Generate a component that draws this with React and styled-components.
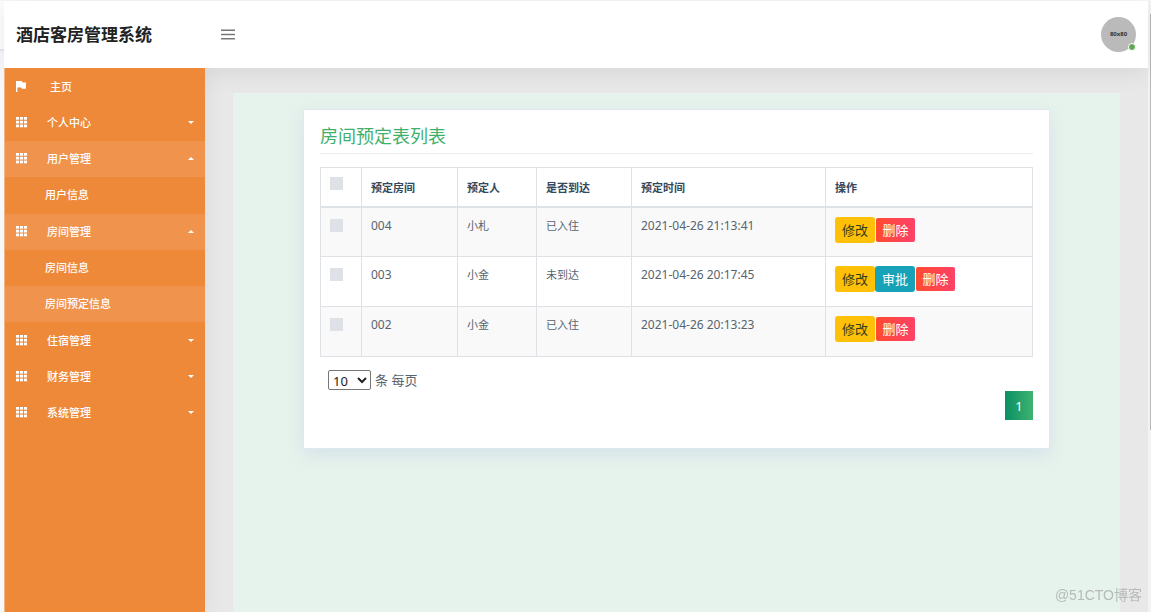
import React, { useState } from "react";
import styled, { createGlobalStyle, css } from "styled-components";

const Global = createGlobalStyle`
  *, *::before, *::after { box-sizing: border-box; }
  body {
    margin: 0;
    font-family: "Noto Sans", "Noto Sans CJK SC", sans-serif;
    font-size: 13px;
    color: #56646f;
    background: #f5f7fa;
  }
  button, select, input { font-family: inherit; margin: 0; }
  a { color: inherit; text-decoration: none; }
  ul { list-style: none; margin: 0; padding: 0; }
`;

const Page = styled.div`
  display: grid;
  grid-template-columns: 4px minmax(0, 1fr) 3px;
  min-height: 100vh;
  padding-top: 1px;
  overflow: hidden;
`;

const Rail = styled.div`
  background: #f7f8fb;
  &::before {
    content: "";
    display: block;
    height: 50px;
    background: #fdfdfd;
    border-bottom: 2px solid #e6e9ee;
  }
`;

const ScrollTrack = styled.div`
  display: flex;
  justify-content: flex-end;
  padding-top: 13px;
  background: #f3f3f3;
`;

const ScrollThumb = styled.div`
  width: 1px;
  height: 416px;
  background: #b8b8b8;
`;

const Shell = styled.div`
  display: flex;
  flex-direction: column;
  background: #e8e8e8;
`;

const Header = styled.header`
  position: relative;
  z-index: 2;
  display: flex;
  align-items: center;
  height: 67px;
  padding: 0 12px;
  background: #fff;
  box-shadow: 0 4px 24px rgba(0, 0, 0, 0.08);
`;

const Brand = styled.h1`
  flex: none;
  width: 204px;
  margin: 0;
  font-size: 17px;
  line-height: 24px;
  font-weight: 700;
  color: #222;
`;

const MenuToggle = styled.button`
  display: flex;
  padding: 0;
  border: 0;
  background: none;
  color: #777;
  cursor: pointer;
`;

const Avatar = styled.button`
  position: relative;
  width: 35px;
  height: 35px;
  margin-left: auto;
  padding: 0;
  border: 0;
  border-radius: 50%;
  background: #bababa;
  color: #333;
  font-size: 6px;
  font-weight: 700;
  line-height: 35px;
`;

const Status = styled.span`
  position: absolute;
  right: 0;
  bottom: 1px;
  width: 8px;
  height: 8px;
  border: 1px solid #fff;
  border-radius: 50%;
  background: #62a654;
`;

const Body = styled.div`
  display: flex;
  flex: 1;
`;

const Sidebar = styled.nav`
  position: relative;
  z-index: 3;
  flex: none;
  width: 201px;
  padding-top: 1px;
  background: #ed8939;
  border-left: 1px solid #f3b581;
  box-shadow: 2px 0 20px rgba(0, 0, 0, 0.06);
  clip-path: inset(0 -30px 0 0);
`;

const itemStyle = css`
  display: flex;
  align-items: center;
  width: 100%;
  height: 36px;
  border: 0;
  color: #fff;
  font-size: 11px;
  line-height: 16px;
  font-weight: 500;
  text-align: left;
  cursor: pointer;
  background: ${(p) => (p.$active ? "#f0934d" : "transparent")};
`;

const MenuButton = styled.button`
  ${itemStyle}
  gap: 20px;
  padding: 0 11px;
`;

const HomeLink = styled.a`
  ${itemStyle}
  gap: 23px;
  padding: 0 11px;
`;

const SubLink = styled.a`
  ${itemStyle}
  padding: 0 40px;
`;

const SubMenu = styled.ul`
  margin-bottom: 1px;
`;

const MenuIcon = styled.svg`
  flex: none;
  fill: currentColor;
`;

const Caret = styled.svg`
  margin-left: auto;
  fill: currentColor;
`;

const Main = styled.main`
  display: flex;
  flex: 1;
  min-width: 0;
  padding: 25px 28px 0;
`;

const Canvas = styled.div`
  flex: 1;
  min-width: 0;
  padding: 16px 70px;
  background: #e6f3ec;
`;

const Card = styled.section`
  padding: 14px 16px 28px;
  border: 1px solid #e0e8ef;
  border-radius: 2px;
  background: #fff;
  box-shadow: 0 6px 18px rgba(190, 203, 230, 0.4);
`;

const CardTitle = styled.h2`
  margin: 0 0 13px;
  padding-bottom: 5px;
  border-bottom: 1px solid #ececee;
  font-size: 18px;
  line-height: 24px;
  font-weight: 400;
  color: #3fb06c;
`;

const Table = styled.table`
  width: 100%;
  table-layout: fixed;
  border-collapse: collapse;
  font-size: 11px;
  line-height: 18px;
`;

const Col = styled.col`
  width: ${(p) => p.$w || "auto"};
`;

const Th = styled.th`
  height: 39px;
  padding: 3px 9px 0;
  border: 1px solid #dee2e6;
  border-bottom-width: 2px;
  text-align: left;
  vertical-align: middle;
  font-weight: 700;
  color: #34495e;
`;

const Tr = styled.tr`
  height: 50px;
  &:nth-child(odd) { background: #f9f9f9; }
`;

const Td = styled.td`
  padding: 9px 9px 0;
  border: 1px solid #dee2e6;
  vertical-align: top;
  font-size: ${(p) => (p.$numeric ? "12px" : "11px")};
`;

const Check = styled.input`
  appearance: none;
  display: block;
  width: 13px;
  height: 13px;
  margin: ${(p) => (p.$head ? "-9px 0 0" : "2px 0 0")};
  background: #dee2e6;
  &:checked { background: #3fb06c; }
`;

const Actions = styled.div`
  display: flex;
  align-items: center;
`;

const tones = {
  edit: css`background: #ffc107; color: #343a1f;`,
  approve: css`background: #17a2b8; color: #fff;`,
  remove: css`
    height: 24px;
    width: 39px;
    margin-left: 1px;
    border-radius: 2px;
    background: linear-gradient(90deg, #ff4b2f, #ff4169);
    color: #fff;
  `,
};

const ActionButton = styled.button`
  width: 40px;
  height: 26px;
  padding: 0;
  border: 0;
  border-radius: 3px;
  font-size: 13px;
  line-height: 18px;
  cursor: pointer;
  ${(p) => tones[p.$tone]}
`;

const PageSize = styled.label`
  display: flex;
  align-items: center;
  gap: 4px;
  margin: 13px 8px 0;
  line-height: 20px;
`;

const SizeSelect = styled.select`
  width: 43px;
  height: 20px;
  padding: 0;
  border: 1px solid #767676;
  border-radius: 2px;
  background: #fff;
  color: #222;
  font-size: 13px;
`;

const Pager = styled.div`
  display: flex;
  justify-content: flex-end;
  margin-top: 1px;
`;

const PageButton = styled.button`
  width: 28px;
  height: 29px;
  padding: 0;
  border: 0;
  background: linear-gradient(90deg, #0a8f63, #3fb371);
  color: #fff;
  font-size: 13px;
`;

const Watermark = styled.span`
  position: fixed;
  right: 9px;
  bottom: 7px;
  z-index: 5;
  font-family: "Liberation Sans", "Noto Sans CJK SC", sans-serif;
  font-size: 14px;
  line-height: 20px;
  color: #b5bab8;
  pointer-events: none;
`;

const menu = [
  { name: "个人中心" },
  { name: "用户管理", children: [{ name: "用户信息" }] },
  { name: "房间管理", children: [{ name: "房间信息" }, { name: "房间预定信息", active: true }] },
  { name: "住宿管理" },
  { name: "财务管理" },
  { name: "系统管理" },
];

const bookings = [
  { room: "004", guest: "小札", status: "已入住", time: "2021-04-26 21:13:41" },
  { room: "003", guest: "小金", status: "未到达", time: "2021-04-26 20:17:45", pending: true },
  { room: "002", guest: "小金", status: "已入住", time: "2021-04-26 20:13:23" },
];

const GridIcon = () => (
  <MenuIcon width="11" height="12" viewBox="0 0 11 12" aria-hidden="true">
    {[0, 3.8, 7.6].map((y) =>
      [0, 4, 8].map((x) => <rect key={`${x}-${y}`} x={x} y={y} width="3.1" height="2.7" />)
    )}
  </MenuIcon>
);

const FlagIcon = () => (
  <MenuIcon width="11" height="12" viewBox="0 0 11 12" aria-hidden="true">
    <path d="M0 0h6l.4 1.4H10v6.4H5.8L5.4 6.4H1.4V11H0z" />
  </MenuIcon>
);

const MenuGroup = ({ item }) => {
  const [open, setOpen] = useState(Boolean(item.children));
  return (
    <li>
      <MenuButton type="button" $active={open} aria-expanded={open} onClick={() => setOpen(!open)}>
        <GridIcon />
        <span>{item.name}</span>
        <Caret width="6" height="5" viewBox="0 0 6 5" aria-hidden="true">
          <path d={open ? "M0 3l3-3 3 3z" : "M0 0h6L3 3z"} />
        </Caret>
      </MenuButton>
      {open && item.children && (
        <SubMenu>
          {item.children.map((child) => (
            <li key={child.name}>
              <SubLink href="#" $active={child.active}>{child.name}</SubLink>
            </li>
          ))}
        </SubMenu>
      )}
    </li>
  );
};

export default function App() {
  return (
    <>
      <Global />
      <Page>
        <Rail />
        <Shell>
          <Header>
            <Brand>酒店客房管理系统</Brand>
            <MenuToggle type="button" aria-label="菜单">
              <svg width="16" height="11" viewBox="0 0 16 11" aria-hidden="true">
                <path d="M1 1.2h14M1 5.5h14M1 9.8h14" stroke="currentColor" strokeWidth="1.4" />
              </svg>
            </MenuToggle>
            <Avatar type="button">
              80x80
              <Status />
            </Avatar>
          </Header>
          <Body>
            <Sidebar>
              <ul>
                <li>
                  <HomeLink href="#">
                    <FlagIcon />
                    <span>主页</span>
                  </HomeLink>
                </li>
                {menu.map((item) => <MenuGroup key={item.name} item={item} />)}
              </ul>
            </Sidebar>
            <Main>
              <Canvas>
                <Card>
                  <CardTitle>房间预定表列表</CardTitle>
                  <Table>
                    <colgroup>
                      <Col $w="41px" />
                      <Col $w="96px" />
                      <Col $w="79px" />
                      <Col $w="95px" />
                      <Col $w="194px" />
                      <Col />
                    </colgroup>
                    <thead>
                      <tr>
                        <Th scope="col"><Check type="checkbox" $head aria-label="全选" /></Th>
                        <Th scope="col">预定房间</Th>
                        <Th scope="col">预定人</Th>
                        <Th scope="col">是否到达</Th>
                        <Th scope="col">预定时间</Th>
                        <Th scope="col">操作</Th>
                      </tr>
                    </thead>
                    <tbody>
                      {bookings.map((b) => (
                        <Tr key={b.room}>
                          <Td><Check type="checkbox" aria-label={b.room} /></Td>
                          <Td $numeric>{b.room}</Td>
                          <Td>{b.guest}</Td>
                          <Td>{b.status}</Td>
                          <Td $numeric>{b.time}</Td>
                          <Td>
                            <Actions>
                              <ActionButton type="button" $tone="edit">修改</ActionButton>
                              {b.pending && <ActionButton type="button" $tone="approve">审批</ActionButton>}
                              <ActionButton type="button" $tone="remove">删除</ActionButton>
                            </Actions>
                          </Td>
                        </Tr>
                      ))}
                    </tbody>
                  </Table>
                  <PageSize>
                    <SizeSelect defaultValue="10">
                      <option>10</option>
                      <option>25</option>
                      <option>50</option>
                    </SizeSelect>
                    条 每页
                  </PageSize>
                  <Pager>
                    <PageButton type="button">1</PageButton>
                  </Pager>
                </Card>
              </Canvas>
            </Main>
          </Body>
        </Shell>
        <ScrollTrack><ScrollThumb /></ScrollTrack>
      </Page>
      <Watermark>@51CTO博客</Watermark>
    </>
  );
}
